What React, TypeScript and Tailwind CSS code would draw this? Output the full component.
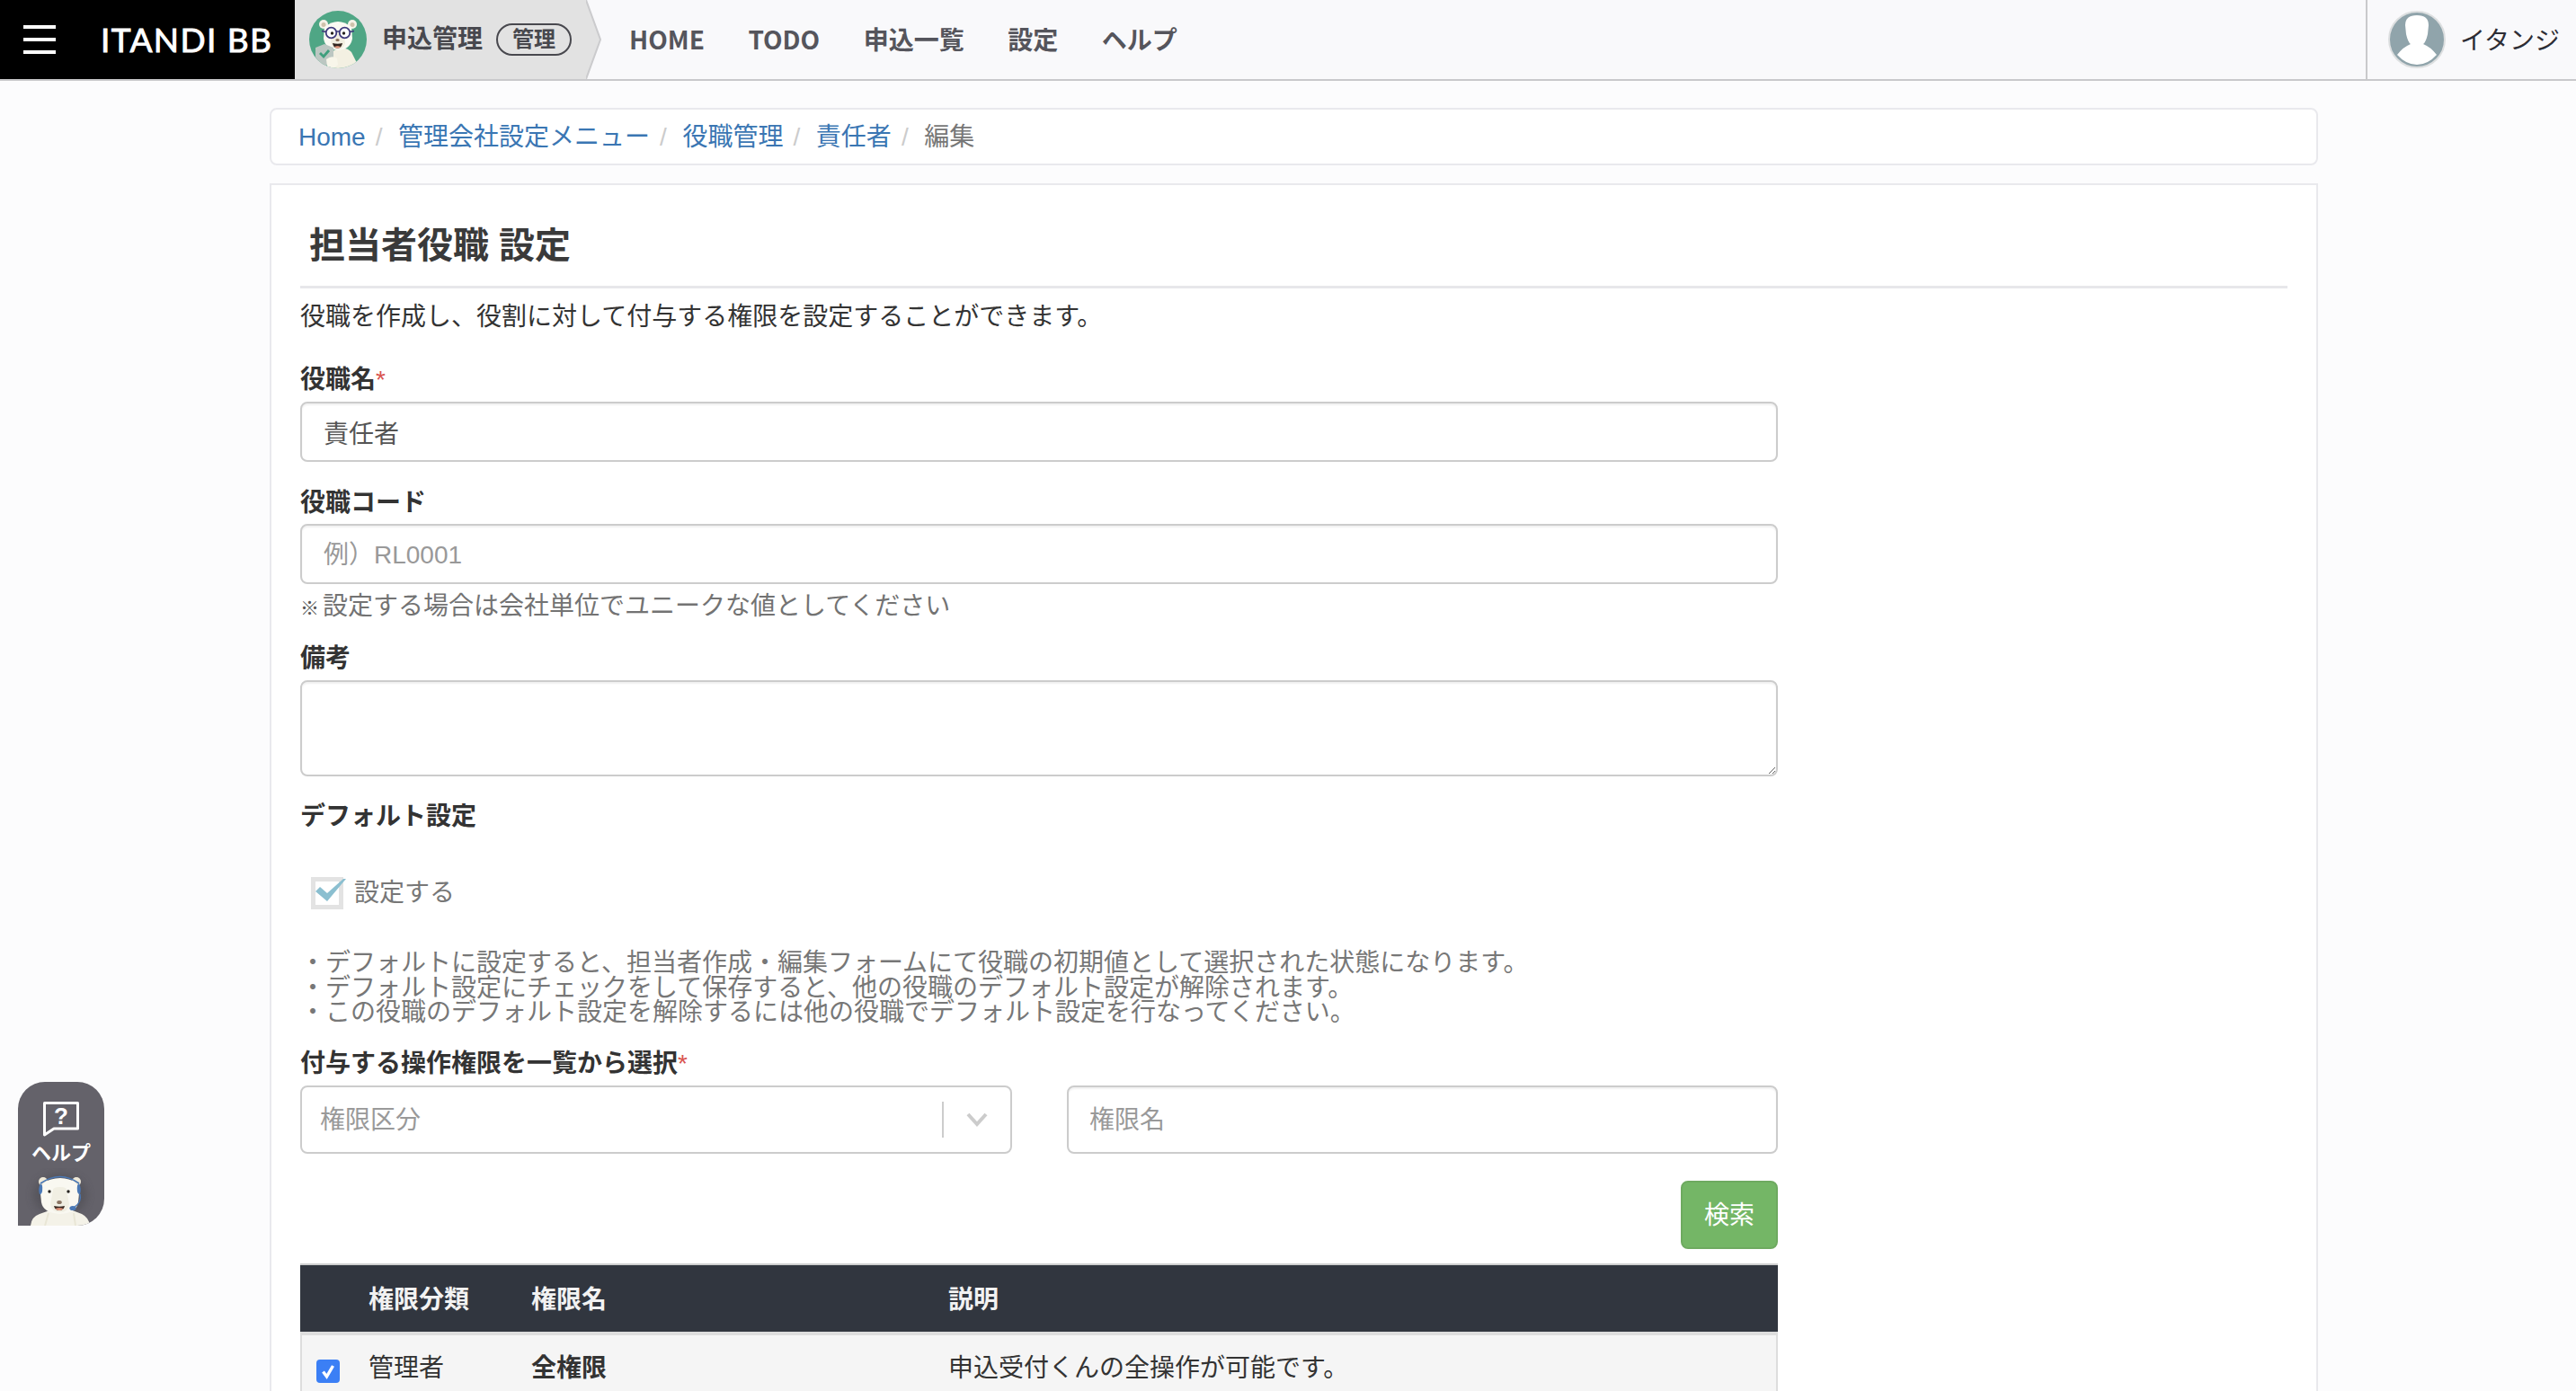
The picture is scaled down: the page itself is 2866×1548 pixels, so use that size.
import React from "react";

const FONT = '"Liberation Sans", "Noto Sans CJK JP", sans-serif';

function ClerkBear() {
  return (
    <svg viewBox="0 0 64 64" className="h-[64px] w-[64px] shrink-0">
      <defs>
        <clipPath id="avatarClip">
          <circle cx="32" cy="32" r="32" />
        </clipPath>
      </defs>
      <g clipPath="url(#avatarClip)">
        <rect width="64" height="64" fill="#4fa685" />
        <path d="M26 45 Q40 38 47 46 L56 64 L24 64 Z" fill="#f3f0e2" />
        <circle cx="16" cy="15" r="5" fill="#f5f3e8" />
        <circle cx="48" cy="15" r="5" fill="#f5f3e8" />
        <circle cx="16" cy="15.5" r="2.5" fill="#cfc2ab" />
        <circle cx="48" cy="15.5" r="2.5" fill="#cfc2ab" />
        <path d="M17 18 Q32 6 47 18 L48 31 Q46 43 32 44 Q18 43 16 31 Z" fill="#fbfaf3" />
        <path d="M26 24 Q32 20 38 24 L40 36 Q38 43 32 43 Q26 43 24 36 Z" fill="#f1eee0" />
        <circle cx="24.5" cy="24.5" r="5.8" fill="#ffffff" stroke="#3e3a7c" strokeWidth="1.8" />
        <circle cx="39.5" cy="24.5" r="5.8" fill="#ffffff" stroke="#3e3a7c" strokeWidth="1.8" />
        <path d="M14 22.5 L19 23.5 M30 23 L34 23 M45 23.5 L50 22.5" stroke="#3e3a7c" strokeWidth="1.6" fill="none" />
        <circle cx="25.5" cy="25" r="1.7" fill="#26231f" />
        <circle cx="38.5" cy="25" r="1.7" fill="#26231f" />
        <ellipse cx="31.5" cy="32.5" rx="2.1" ry="1.6" fill="#8a6f5a" />
        <path d="M26 36 Q31.5 37.5 37 36 Q36 41.5 31.5 41.5 Q27 41.5 26 36 Z" fill="#33261f" />
        <path d="M28 40 Q31.5 38.5 35 40 Q33.5 41.5 31.5 41.5 Q29.5 41.5 28 40 Z" fill="#ef9d82" />
        <path d="M7 41 L17 37 L27 41 L27 52 Q24 58 17 62 Q9 58 7 51 Z" fill="#bcc7c2" />
        <path d="M12 47 L16 51 L22 44" fill="none" stroke="#3f9f7d" strokeWidth="2.8" />
        <path d="M19 54 Q25 49 31 53 L32 60 Q26 67 20 62 Z" fill="#f8f6ea" />
      </g>
    </svg>
  );
}

function HelpBear() {
  return (
    <svg viewBox="0 0 80 64" className="h-[64px] w-[80px]">
      <defs>
        <filter id="bearGlow" x="-30%" y="-30%" width="160%" height="160%">
          <feGaussianBlur stdDeviation="4" />
        </filter>
      </defs>
      <ellipse cx="39" cy="30" rx="30" ry="24" fill="#4a484f" opacity="0.5" filter="url(#bearGlow)" />
      <path d="M6 64 Q7 54 16 51 L30 46 L50 46 L63 51 Q71 55 72 64 Z" fill="#f4f2e8" />
      <path d="M22 64 L26 50 M56 64 L54 50" stroke="#e9e6d6" strokeWidth="2" fill="none" />
      <circle cx="20" cy="15" r="5" fill="#efe9d8" />
      <circle cx="57" cy="15" r="5" fill="#efe9d8" />
      <path d="M17 28 Q16 12 39 11 Q61 12 60 28 L59 38 Q57 50 39 51 Q20 50 18 38 Z" fill="#f9f8f1" />
      <path d="M31 24 Q31 21 39 21 Q46 21 46 24 L49 40 Q48 49 39 49 Q29 49 28 40 Z" fill="#f1efe3" />
      <path d="M17 17 Q39 2 60 17" fill="none" stroke="#4a78b5" strokeWidth="1.6" />
      <path d="M17 17 Q20 18 19 26 Q18 30 16 29 Q14 23 17 17 Z" fill="#4a78b5" />
      <path d="M60 17 Q57 18 58 26 Q59 30 61 29 Q63 23 60 17 Z" fill="#4a78b5" />
      <path d="M61 29 Q63 38 55 43" fill="none" stroke="#4a78b5" strokeWidth="1.4" />
      <ellipse cx="53" cy="44.5" rx="3.6" ry="2.6" fill="#4a78b5" />
      <circle cx="27" cy="26" r="1.7" fill="#26231f" />
      <circle cx="48" cy="26" r="1.7" fill="#26231f" />
      <ellipse cx="38" cy="38" rx="2.8" ry="2" fill="#8a7564" />
      <path d="M32 42 Q38 43.5 44 42 Q43 47 38 47 Q33 47 32 42 Z" fill="#3a2a22" />
      <path d="M33.5 45 Q38 43.5 42.5 45 Q41 47 38 47 Q35 47 33.5 45 Z" fill="#ef9d82" />
    </svg>
  );
}

function Label({ children, required, className }: { children: React.ReactNode; required?: boolean; className: string }) {
  return (
    <div className={`font-bold leading-[40px] text-[#333333] ${className}`}>
      {children}
      {required && <span className="font-normal leading-none text-[#d9534f]">*</span>}
    </div>
  );
}

function Crumb({ children, href }: { children: React.ReactNode; href?: boolean }) {
  return href ? (
    <>
      <a className="text-[#3a76b3]">{children}</a>
      <span className="ml-[11px] mr-[17.6px] text-[#cccccc]">/</span>
    </>
  ) : (
    <span className="text-[#777777]">{children}</span>
  );
}

const fieldClass =
  "block w-full rounded-[8px] border-2 border-[#cccccc] bg-white px-[24px] text-[#555555] outline-none placeholder:text-[#999999] shadow-[inset_0_2px_2px_rgba(0,0,0,0.06)]";

export default function App() {
  return (
    <div
      className="relative h-[1548px] w-[2866px] overflow-hidden bg-[#fcfcfd] text-[28px] text-[#333333]"
      style={{ fontFamily: FONT }}
    >
      <header className="flex h-[90px] items-stretch border-b-2 border-[#c9c9cb] bg-[#f9f9fb]">
        <div className="flex w-[328px] shrink-0 items-center bg-black pl-[26px]">
          <div className="flex w-[36px] flex-col gap-[10px]">
            <span className="block h-[4px] bg-white" />
            <span className="block h-[4px] bg-white" />
            <span className="block h-[4px] bg-white" />
          </div>
          <span
            className="ml-[50px] whitespace-nowrap text-[37px] font-normal tracking-[1.4px] text-white [-webkit-text-stroke:0.9px_white]"
            style={{ fontFamily: 'Lato, sans-serif' }}
          >
            ITANDI BB
          </span>
        </div>
        <div className="relative flex w-[325px] shrink-0 items-center bg-[#e2e2e2] pl-[16px]">
          <ClerkBear />
          <span className="ml-[17px] font-bold text-[#48484e]">申込管理</span>
          <span className="ml-[15px] flex h-[36px] w-[84px] items-center justify-center rounded-full border-2 border-[#48484e] text-[24px] font-bold text-[#48484e]">
            管理
          </span>
          <svg viewBox="0 0 18 88" className="absolute left-[324px] top-0 h-[88px] w-[18px]">
            <path d="M0 0 L16 44 L0 88 Z" fill="#e2e2e2" />
            <path d="M0 0 L16 44 L0 88" fill="none" stroke="#cbcbcd" strokeWidth="2" />
          </svg>
        </div>
        <nav
          className="ml-[47px] flex items-center gap-[48.5px] whitespace-nowrap pb-[3px] font-bold text-[#55555c]"
          style={{ fontFamily: '"Noto Sans CJK JP", sans-serif' }}
        >
          <span>HOME</span>
          <span>TODO</span>
          <span>申込一覧</span>
          <span>設定</span>
          <span>ヘルプ</span>
        </nav>
        <div className="ml-auto flex w-[234px] items-center border-l-2 border-[#c9c9cb] pl-[23px]">
          <div className="flex h-[64px] w-[64px] shrink-0 items-center justify-center overflow-hidden rounded-full border-2 border-[#dddfe0] bg-[#90a4ab]">
            <svg viewBox="0 0 60 60" className="h-[60px] w-[60px]">
              <path d="M17 14 Q17 3 30 3 Q43 3 43 14 L42 24 Q40 33 37 35 Q45 38 52 47 Q42 58 30 58 Q18 58 8 47 Q15 38 23 35 Q20 33 18 24 Z" fill="#ffffff" />
            </svg>
          </div>
          <span className="ml-[16px] mt-[3px] whitespace-nowrap text-[#2d2d35]">イタンジ</span>
        </div>
      </header>

      <main className="px-[300px] pr-[287px]">
        <nav className="mt-[30px] flex h-[64px] items-center rounded-[8px] border-2 border-[#e9e9ed] bg-white pl-[30px] pt-[1px]">
          <Crumb href>Home</Crumb>
          <Crumb href>管理会社設定メニュー</Crumb>
          <Crumb href>役職管理</Crumb>
          <Crumb href>責任者</Crumb>
          <Crumb>編集</Crumb>
        </nav>

        <section className="mt-[20px] h-[1400px] border-2 border-[#e9e9ed] bg-white px-[32px]">
          <h2 className="border-b-[3px] border-[#e7e7ea] pb-[21px] pl-[10px] pt-[43px] text-[40px] font-bold leading-[48px] text-[#3a3a3a]">
            担当者役職 設定
          </h2>

          <p className="mt-[12px] leading-[40px] text-[#333333]">
            役職を作成し、役割に対して付与する権限を設定することができます。
          </p>

          <div className="w-[1644px]">
            <Label required className="mt-[30px]">役職名</Label>
            <input readOnly value="責任者" className={`${fieldClass} mt-[4px] h-[67px]`} />

            <Label className="mt-[26px]">役職コード</Label>
            <input readOnly placeholder="例）RL0001" className={`${fieldClass} mt-[3px] h-[67px] pt-[2px]`} />

            <p className="mt-[10px] leading-[30px] text-[#737373]">
              <span className="inline-block w-[25px] text-[21px] font-bold leading-none text-[#555555]">※</span>設定する場合は会社単位でユニークな値としてください
            </p>

            <Label className="mt-[23px]">備考</Label>
            <textarea readOnly className={`${fieldClass} mt-[4px] h-[107px]`} />

            <Label className="mt-[25px]">デフォルト設定</Label>

            <label className="ml-[12px] mt-[47px] flex h-[36px] items-center text-[#777777]">
              <span className="relative block h-[36px] w-[36px] border-[5px] border-[#e3e3e3] bg-white">
                <svg viewBox="0 0 40 36" className="absolute left-[-5px] top-[-5px] h-[36px] w-[40px] overflow-visible">
                  <path d="M5 16 L10 11 L18 18 L36 2 L39 2 L18 27 Z" fill="#8bbfd0" />
                </svg>
              </span>
              <span className="ml-[12px]">設定する</span>
            </label>

            <div className="mt-[46px] text-[#777777] [&>p]:leading-[27.5px]">
              <p>・デフォルトに設定すると、担当者作成・編集フォームにて役職の初期値として選択された状態になります。</p>
              <p>・デフォルト設定にチェックをして保存すると、他の役職のデフォルト設定が解除されます。</p>
              <p>・この役職のデフォルト設定を解除するには他の役職でデフォルト設定を行なってください。</p>
            </div>

            <Label required className="mt-[23.5px]">付与する操作権限を一覧から選択</Label>

            <div className="mt-[4px] flex gap-[61px]">
              <div className="flex h-[76px] w-[792px] items-center rounded-[8px] border-2 border-[#cccccc] bg-white">
                <span className="ml-[20px] flex-1 pt-[2px] text-[#999999]">権限区分</span>
                <span className="h-[40px] w-[2px] bg-[#cccccc]" />
                <svg viewBox="0 0 24 16" className="mx-[25px] h-[16px] w-[24px]">
                  <path d="M2 2 L12 13 L22 2" fill="none" stroke="#cccccc" strokeWidth="4" />
                </svg>
              </div>
              <input
                readOnly
                placeholder="権限名"
                className="block h-[76px] w-[791px] rounded-[8px] border-2 border-[#cccccc] bg-white px-[23px] pt-[2px] outline-none placeholder:text-[#999999] shadow-[inset_0_2px_2px_rgba(0,0,0,0.06)]"
              />
            </div>

            <div className="mt-[30px] flex justify-end">
              <button className="h-[76px] w-[108px] rounded-[8px] border-2 border-[#6eaa60] bg-[#74b666] pt-[2px] text-white">
                検索
              </button>
            </div>

            <div className="mt-[16px] border-t-2 border-[#cfcfcf]">
              <div className="flex h-[74px] items-center bg-[#31363f] pt-[3px] font-bold text-[#f2f2f2]">
                <span className="ml-[76px] w-[181px]">権限分類</span>
                <span className="w-[464px]">権限名</span>
                <span>説明</span>
              </div>
              <div className="flex h-[100px] items-start border-x-2 border-t-4 border-[#dddddd] bg-[#f5f5f5] pt-[22px]">
                <span className="ml-[16px] mt-[5px] flex h-[26px] w-[26px] items-center justify-center rounded-[4px] bg-[#3b7ff5]">
                  <svg viewBox="0 0 26 26" className="h-[26px] w-[26px]">
                    <path d="M7.5 13.5 L11.5 19 L18.5 7" fill="none" stroke="#ffffff" strokeWidth="3.4" />
                  </svg>
                </span>
                <span className="ml-[32px] w-[181px] leading-[30px]">管理者</span>
                <span className="w-[464px] font-bold leading-[30px]">全権限</span>
                <span className="leading-[30px]">申込受付くんの全操作が可能です。</span>
              </div>
            </div>
          </div>
        </section>
      </main>

      <aside className="absolute left-[20px] top-[1204px] flex h-[160px] w-[96px] flex-col items-center overflow-hidden rounded-[30px] rounded-bl-none bg-[#64626a]">
        <svg viewBox="0 0 40 39" className="mt-[22px] h-[39px] w-[40px]">
          <path d="M1.5 1.5 H38.5 V30 H12 L1.5 37 Z" fill="none" stroke="#ffffff" strokeWidth="3" strokeLinejoin="round" />
          <text x="20" y="25" textAnchor="middle" fontSize="26" fontWeight="700" fill="#ffffff" fontFamily="Liberation Sans, sans-serif">?</text>
        </svg>
        <span className="mt-[5px] whitespace-nowrap text-[22px] font-bold leading-[28px] text-white">ヘルプ</span>
        <div className="absolute left-[8px] top-[96px]">
          <HelpBear />
        </div>
      </aside>
    </div>
  );
}
